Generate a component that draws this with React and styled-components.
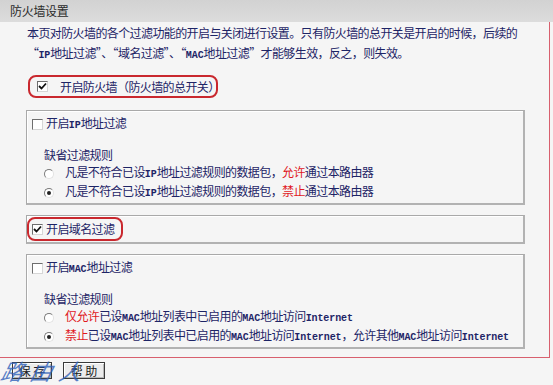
import React from "react";
import styled, { createGlobalStyle } from "styled-components";

const Global = createGlobalStyle`
  html, body { margin: 0; padding: 0; background: #f5f5f5; }
  body {
    font-family: "Noto Sans CJK SC", "Noto Sans", sans-serif;
    font-size: 12px;
  }
`;

const Page = styled.div`
  position: relative;
  width: 553px;
  height: 385px;
  overflow: hidden;
  background: #f5f5f5;
  color: #1d2466;
  letter-spacing: -0.6px;
  line-height: 18px;
`;

const Header = styled.div`
  height: 22px;
  line-height: 22px;
  padding-left: 10px;
  background: linear-gradient(#d2d2d2, #dcdcdc);
  color: #2a2a2a;
  font-size: 12px;
  letter-spacing: -0.3px;
`;

const Frame = styled.div`
  width: 550px;
  box-sizing: border-box;
  border-right: 1px solid #d8606e;
  border-bottom: 1px solid #d8606e;
  padding-bottom: 8px;
`;

const Intro = styled.div`
  padding: 1px 0 0 27px;
  line-height: 20px;
`;

const Line = styled.div`
  white-space: nowrap;
  height: 20px;
`;

const Latin = styled.span`
  font-family: "Liberation Mono", monospace;
  font-size: 10px;
  font-weight: bold;
  letter-spacing: -0.1px;
`;

const Red = styled.span`
  color: #e0191e;
`;

const MasterRow = styled.div`
  display: flex;
  align-items: center;
  gap: 12px;
  box-sizing: border-box;
  width: 190px;
  height: 23px;
  margin: 12px 0 0 28px;
  padding-left: 7px;
  border: 2px solid #c9282e;
  border-radius: 8px;
  white-space: nowrap;
`;

const Box = styled.div`
  margin: ${(p) => (p.$first ? "12px" : "10px")} 0 0 26px;
  width: 499px;
  box-sizing: border-box;
  padding-top: 1px;
  padding-bottom: 1px;
  border-top: 1px solid #a9a9a9;
  border-left: 1px solid #a9a9a9;
  border-right: 2px solid #b2b2b2;
  border-bottom: 2px solid #b2b2b2;
  box-shadow: inset 1px 1px 0 #ffffff;
`;

const CheckRow = styled.div`
  display: flex;
  width: fit-content;
  align-items: center;
  gap: 3px;
  box-sizing: border-box;
  height: 24px;
  padding: 0 7px 0 3px;
  border: 2px solid ${(p) => (p.$highlight ? "#c9282e" : "transparent")};
  border-radius: 8px;
  white-space: nowrap;
`;

const Check = styled.span`
  display: inline-flex;
  align-items: center;
  justify-content: center;
  width: 11px;
  height: 11px;
  box-sizing: border-box;
  background: #fff;
  border: 1px solid;
  border-color: #6e6e6e #d6d6d6 #d6d6d6 #6e6e6e;
  flex: none;
`;

const Rules = styled.div`
  padding-left: 17px;
  margin-top: 10px;
`;

const RuleTitle = styled.div`
  line-height: 18px;
  height: 18px;
`;

const RadioRow = styled.div`
  display: flex;
  align-items: center;
  gap: 11px;
  height: 19px;
  white-space: nowrap;
`;

const Radio = styled.span`
  position: relative;
  display: inline-block;
  width: 10px;
  height: 10px;
  box-sizing: border-box;
  border-radius: 50%;
  border: 1px solid;
  border-color: #7a7a7a #e2e2e2 #e2e2e2 #7a7a7a;
  background: #fff;
  flex: none;
  &::after {
    content: "";
    display: ${(p) => (p.$on ? "block" : "none")};
    position: absolute;
    left: 2px;
    top: 2px;
    width: 4px;
    height: 4px;
    border-radius: 50%;
    background: #222;
  }
`;

const Buttons = styled.div`
  display: flex;
  gap: 11px;
  padding: 4px 0 0 12px;
`;

const Button = styled.button`
  height: 17px;
  width: ${(p) => p.$w}px;
  padding: 0;
  border: 1px solid #3a3a3a;
  background: #ececec;
  box-shadow: inset 1px 1px 0 #fff, inset -1px -1px 0 #b8b8b8;
  font-family: "Noto Sans CJK SC", sans-serif;
  font-size: 12px;
  line-height: 15px;
  color: #1a1a1a;
  letter-spacing: 0;
`;

const Watermark = styled.div`
  position: absolute;
  left: 2px;
  top: 357px;
  font-family: "Noto Sans CJK SC", sans-serif;
  font-size: 22px;
  line-height: 26px;
  font-style: italic;
  font-weight: 400;
  letter-spacing: 7px;
  color: rgba(45, 95, 185, 0.8);
  pointer-events: none;
  transform: skewX(-14deg);
`;

const Tick = () => (
  <svg width="9" height="9" viewBox="0 0 9 9">
    <path d="M1 4 L3.5 6.5 L8 1.5" fill="none" stroke="#111" strokeWidth="1.8" />
  </svg>
);

const CheckBox = ({ on }) => <Check>{on && <Tick />}</Check>;

export default function App() {
  return (
    <>
      <Global />
      <Page>
        <Header>防火墙设置</Header>
        <Frame>
          <Intro>
            <Line>本页对防火墙的各个过滤功能的开启与关闭进行设置。只有防火墙的总开关是开启的时候，后续的</Line>
            <Line>
              “<Latin>IP</Latin>地址过滤”、“域名过滤”、“<Latin>MAC</Latin>地址过滤”才能够生效，反之，则失效。
            </Line>
          </Intro>
          <MasterRow>
            <CheckBox on />
            <span>开启防火墙（防火墙的总开关）</span>
          </MasterRow>

          <Box $first>
            <CheckRow>
              <CheckBox />
              <span>开启<Latin>IP</Latin>地址过滤</span>
            </CheckRow>
            <Rules>
              <RuleTitle>缺省过滤规则</RuleTitle>
              <RadioRow>
                <Radio />
                <span>凡是不符合已设<Latin>IP</Latin>地址过滤规则的数据包，<Red>允许</Red>通过本路由器</span>
              </RadioRow>
              <RadioRow>
                <Radio $on />
                <span>凡是不符合已设<Latin>IP</Latin>地址过滤规则的数据包，<Red>禁止</Red>通过本路由器</span>
              </RadioRow>
            </Rules>
          </Box>

          <Box>
            <CheckRow $highlight>
              <CheckBox on />
              <span>开启域名过滤</span>
            </CheckRow>
          </Box>

          <Box>
            <CheckRow>
              <CheckBox />
              <span>开启<Latin>MAC</Latin>地址过滤</span>
            </CheckRow>
            <Rules>
              <RuleTitle>缺省过滤规则</RuleTitle>
              <RadioRow>
                <Radio />
                <span><Red>仅允许</Red>已设<Latin>MAC</Latin>地址列表中已启用的<Latin>MAC</Latin>地址访问<Latin>Internet</Latin></span>
              </RadioRow>
              <RadioRow>
                <Radio $on />
                <span><Red>禁止</Red>已设<Latin>MAC</Latin>地址列表中已启用的<Latin>MAC</Latin>地址访问<Latin>Internet</Latin>，允许其他<Latin>MAC</Latin>地址访问<Latin>Internet</Latin></span>
              </RadioRow>
            </Rules>
          </Box>
        </Frame>
        <Buttons>
          <Button $w={40}>保 存</Button>
          <Button $w={42}>帮 助</Button>
        </Buttons>
        <Watermark>路由人</Watermark>
      </Page>
    </>
  );
}
